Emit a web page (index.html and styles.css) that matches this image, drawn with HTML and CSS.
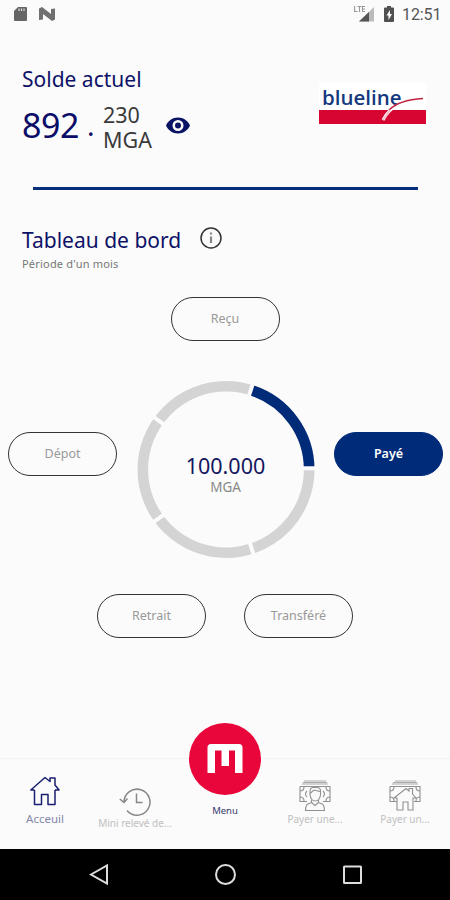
FILE: index.html
```html
<!DOCTYPE html>
<html lang="fr">
<head>
<meta charset="utf-8">
<title>Tableau de bord</title>
<link rel="stylesheet" href="styles.css">
</head>
<body>
<div class="status">
  <svg width="44" height="16" viewBox="0 0 44 16"><path fill="#666" d="M4 1h8q1 0 1 1v12q0 1-1 1H1q-1 0-1-1V5z"/><path stroke="#ddd" stroke-width="1.2" d="M5 2.500v2.500M7.500 2.500v2.500M10 2.500v2.500"/><path fill="#707070" d="M25 2.500l3-1.500 9 7V3l4-.5v11l-3 1.500-9-7v5.500l-4 .5z"/></svg>
  <div class="status-right">
    <svg width="42" height="17" viewBox="0 0 42 17"><path fill="#bbb" d="M20 1v14.500H5z"/><path fill="#555" d="M15 6v9.500H5z"/><path fill="none" stroke="#999" stroke-width="1.100" d="M.6 0v5.500h3M3.500.5h4M5.500.5v5.500M11 .5H8.500v5H11M8.500 3H11"/><path fill="#505050" d="M31 1.500h2V0h4v1.500h2q1 0 1 1V15q0 1-1 1h-8q-1 0-1-1V2.500q0-1 1-1z"/><path fill="#fff" d="M36 4l-3.500 5.500h2V14L38 8h-2z"/></svg>
    <span>12:51</span>
  </div>
</div>
<header class="balance">
  <div>
    <h1 class="title">Solde actuel</h1>
    <div class="amount">
      <span class="whole">892</span><span class="dot">.</span>
      <div class="cents"><span>230</span><span>MGA</span></div>
      <svg width="24" height="17" viewBox="0 0 24 17"><path fill="#0b1464" fill-rule="evenodd" d="M12 .5C6.500.5 2 4 0 8.500c2 4.500 6.500 8 12 8s10-3.500 12-8C22 4 17.500.5 12 .5zM12 3a5.500 5.500 0 1 1 0 11 5.500 5.500 0 0 1 0-11z"/><circle cx="12" cy="8.500" r="3" fill="#0b1464"/></svg>
    </div>
  </div>
  <div class="logo">
    <span>blueline</span>
    <div class="logo-bar"></div>
    <svg class="swoosh" width="107" height="41" viewBox="0 0 107 41"><path d="M64 37Q74 17 104 16" fill="none" stroke="#fff" stroke-width="3"/><path d="M70 27Q80 17 104 15.500" fill="none" stroke="#c02443" stroke-width="1.600"/><path d="M64 37l7-10" stroke="#f3b8c3" stroke-width="1.500"/></svg>
  </div>
</header>
<div class="rule"></div>
<main class="board">
  <div class="heading">
    <h2 class="title">Tableau de bord</h2>
    <svg width="22" height="22" viewBox="0 0 22 22"><circle cx="11" cy="11" r="10" fill="none" stroke="#333" stroke-width="1.500"/><path d="M11 5.500v2M11 9.500v6.500" stroke="#888" stroke-width="2.200"/></svg>
  </div>
  <p class="period">Période d'un mois</p>
  <div class="row top"><button>Reçu</button></div>
  <div class="row middle">
    <button>Dépot</button>
    <div class="ring">
      <svg width="178" height="178" viewBox="-89 -88.5 178 178"><circle r="83.200" fill="none" stroke="#d4d4d4" stroke-width="10.600"/><path d="M83.200 0A83.200 83.200 0 0 0 25.710-79.130" fill="none" stroke="#002b78" stroke-width="10.600"/><path d="M76-1.200h14M23.500 72.300l4.300 13.300M-61.500 44.700l-11.300 8.200M-61.500-44.700l-11.300-8.200M22.500-72.300l4.300-13.300" stroke="#fbfbfb" stroke-width="4"/></svg>
      <div class="ring-text"><strong>100.000</strong><span>MGA</span></div>
    </div>
    <button class="active">Payé</button>
  </div>
  <div class="row bottom"><button>Retrait</button><button>Transféré</button></div>
</main>
<nav class="tabs">
  <a class="home"><svg width="30" height="30" viewBox="0 0 30 30"><path d="M4.500 14V28.500h7V18.500h6.500v10h7V14M4.500 14H.8L15 1.500l5 4V2h5v7l4 5H25" fill="none" stroke="#1b1f70" stroke-width="1.500" stroke-linejoin="round"/></svg><span>Acceuil</span></a>
  <a class="history"><svg width="32" height="29" viewBox="0 0 32 29"><path d="M5 15A13 13 0 1 1 8 23.500M.8 12L5 15.500 8.500 11.500M17.500 6.500v9h6" fill="none" stroke="#888" stroke-width="1.500"/></svg><span>Mini relevé de...</span></a>
  <a class="menu"><svg width="72" height="72" viewBox="0 0 72 72"><circle cx="36" cy="36" r="36" fill="#e8063a"/><path fill="#fff" d="M18.500 50V24.500q0-3.500 3.500-3.500h28q3.500 0 3.500 3.500V50H46V27.500h-6V43h-7.500V27.500H26V50z"/></svg><span>Menu</span></a>
  <a class="pay"><svg width="32" height="32" viewBox="0 0 32 32"><g fill="none" stroke="#909090" stroke-width="1.100"><path d="M5 1h22M4 2.500h24M3 4h26" stroke="#aaa"/><path d="M1 6.500h30v15h-7M8 21.500H1v-15M5 7q0 4-4 4M27 7q0 4 4 4M5 21q0-4-4-4M27 21q0-4 4-4M8 11q-3 3 0 6M24 11q3 3 0 6"/><path fill="#fafafa" d="M12.500 20v2.500L8 24.500q-1.500 2-1.500 6h19q0-4-1.500-6l-4.500-2V20"/><path d="M12.500 22.500l3.500 3 3.500-3"/><path fill="#fafafa" d="M11 11q0-3.500 3.500-3.500H18q3.500 0 3.500 3.500v4q-1 6-5.200 6T11 15zM11.500 13l3.500-3 6 1.500"/></g></svg><span>Payer une...</span></a>
  <a class="pay"><svg width="32" height="32" viewBox="0 0 32 32"><g fill="none" stroke="#909090" stroke-width="1.100"><path d="M6 1h21M4 2.500h24M3 4h26" stroke="#aaa"/><path d="M1 6.500h30v15h-6M8 21.500H1v-15M5 7q0 4-4 4M27 7q0 4 4 4M5 21q0-4-4-4M27 21q0-4 4-4"/><path fill="#fafafa" d="M8 18v12h6v-8h5v8h5V18h3l-3.500-4V8.500h-3.500V11L17 8.500 5 18z"/></g></svg><span>Payer un...</span></a>
</nav>
<footer class="system">
  <svg width="450" height="51" viewBox="0 0 450 51" fill="none" stroke="#ddd" stroke-width="2"><path d="M91 25.500l16-9v18z"/><circle cx="225.500" cy="25.500" r="9.500"/><rect x="344" y="17.500" width="17" height="16.500" rx=".5"/></svg>
</footer>
</body>
</html>
```
FILE: styles.css
```css
* { box-sizing: border-box; }
body { margin: 0; width: 450px; height: 900px; overflow: hidden; background: #fbfbfb; font-family: "Noto Sans", sans-serif; display: flex; flex-direction: column; }
svg { display: block; flex: none; }
h1, h2, p { margin: 0; font-weight: 400; }
.title { color: #0e1267; font-size: 21px; line-height: 29px; white-space: nowrap; }
.status { height: 65px; padding: 6px 11px 0 14px; display: flex; justify-content: space-between; align-items: flex-start; }
.status-right { display: flex; gap: 6px; font: 16px/17px Roboto, sans-serif; letter-spacing: -.1px; color: #555; }
.status-right span { width: 37px; }
.balance { height: 122px; padding: 0 24px 0 22px; display: flex; justify-content: space-between; }
.amount { display: flex; align-items: center; height: 50px; margin-top: 6px; color: #0b0c68; }
.whole { font-size: 34px; letter-spacing: -.4px; width: 65px; line-height: 48px; }
.dot { font-size: 28px; width: 16px; }
.cents { display: flex; flex-direction: column; font-size: 21.500px; line-height: 25px; color: #3a3a3a; width: 63px; padding-top: 3px; }
.logo { position: relative; width: 107px; height: 41px; margin-top: 18px; background: #fff; display: flex; flex-direction: column; justify-content: space-between; }
.logo span { font: 600 20.500px/29px "Open Sans", sans-serif; height: 27px; color: #15387f; padding-left: 3px; }
.logo-bar { height: 14px; background: #d60532; }
.swoosh { position: absolute; left: 0; top: 0; }
.rule { height: 3px; margin: 0 32px 0 33px; background: #052f7b; }
.board { height: 568px; padding-top: 36px; }
.heading { display: flex; align-items: center; height: 29px; padding-left: 22px; }
.heading svg { margin: -5px 0 0 19px; }
.period { font-size: 11px; letter-spacing: .2px; line-height: 15px; padding: 1px 0 0 22px; color: #777; height: 25px; }
.row { display: flex; justify-content: center; }
.top { padding-top: 17px; height: 101px; }
button { width: 109px; height: 44px; border: 1.500px solid #333; border-radius: 22px; background: #fbfbfb; color: #999; font: 12.500px "Noto Sans", sans-serif; padding: 0 0 2px; }
button.active { background: #002b78; border-color: #002b78; color: #fff; font-weight: 600; }
.middle { justify-content: space-between; padding: 0 7px 0 8px; height: 178px; }
.middle button { margin-top: 51px; }
.ring { display: grid; place-items: center; }
.ring > * { grid-area: 1 / 1; }
.ring-text { display: flex; flex-direction: column; align-items: center; color: #888; font-size: 13.500px; line-height: 17px; padding-top: 8px; }
.ring-text strong { color: #15175f; font-size: 21.500px; line-height: 26px; font-weight: 400; }
.bottom { gap: 38px; padding-top: 35px; }
.tabs { height: 91px; border-top: 1px solid #f2f2f2; display: grid; grid-template-columns: repeat(5, 90px); }
.tabs a { display: flex; flex-direction: column; align-items: center; font-size: 10px; line-height: 12px; color: #c0c0c0; white-space: nowrap; }
.tabs .home { padding-top: 17px; font-size: 11.500px; color: #8388aa; }
.home span { margin-top: 7px; }
.history { padding-top: 28px; }
.history span { margin-top: 1px; }
.tabs .menu { margin-top: -36px; color: #35396d; font-size: 9.500px; }
.menu span { margin-top: 10px; }
.pay { padding-top: 21px; }
.pay span { margin-top: 1px; }
.system { height: 51px; background: #000; }
```
